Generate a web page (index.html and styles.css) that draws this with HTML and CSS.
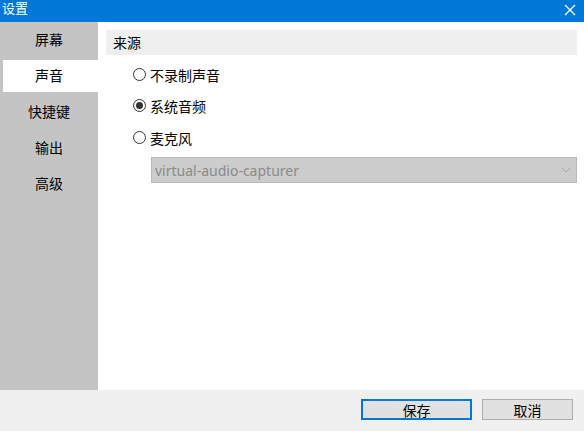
FILE: index.html
```html
<!DOCTYPE html>
<html lang="zh-CN">
<head>
<meta charset="utf-8">
<title>设置</title>
<link rel="stylesheet" href="styles.css">
</head>
<body>
<div class="window">
  <div class="titlebar">
    <span class="title">设置</span>
    <svg class="close" width="12" height="12" viewBox="0 0 12 12"><path d="M1 1 L11 11 M11 1 L1 11" stroke="#fff" stroke-width="1.3" fill="none"/></svg>
  </div>
  <div class="main">
    <div class="sidebar">
      <div class="nav-item">屏幕</div>
      <div class="nav-item active">声音</div>
      <div class="nav-item">快捷键</div>
      <div class="nav-item">输出</div>
      <div class="nav-item">高级</div>
    </div>
    <div class="content">
      <div class="section-head">来源</div>
      <div class="options">
        <label class="radio"><span class="dot"></span>不录制声音</label>
        <label class="radio checked"><span class="dot"></span>系统音频</label>
        <label class="radio"><span class="dot"></span>麦克风</label>
        <div class="select">
          <span class="select-text">virtual-audio-capturer</span>
          <svg class="chev" width="10" height="6" viewBox="0 0 10 6"><path d="M0.5 0.5 L5 5 L9.5 0.5" stroke="#a8a8a8" stroke-width="1" fill="none"/></svg>
        </div>
      </div>
    </div>
  </div>
  <div class="footer">
    <button class="btn primary">保存</button>
    <button class="btn">取消</button>
  </div>
</div>
</body>
</html>
```
FILE: styles.css
```css
* { box-sizing: border-box; }
html, body { margin: 0; padding: 0; }
body {
  width: 584px;
  height: 431px;
  overflow: hidden;
  font-family: "Noto Sans", "Noto Sans CJK SC", sans-serif;
  font-size: 14px;
  color: #000;
  background: #fff;
}
.window {
  display: flex;
  flex-direction: column;
  height: 431px;
}
.titlebar {
  height: 22px;
  background: #0078d7;
  display: flex;
  align-items: center;
  justify-content: space-between;
  padding: 0 8px 0 2px;
  color: #fff;
}
.title {
  font-size: 13px;
  line-height: 16px;
  margin-top: -6px;
}
.close { margin-top: -3px; }
.main {
  flex: 1;
  display: flex;
  min-height: 0;
}
.sidebar {
  width: 98px;
  background: #c4c4c4;
  padding-top: 2px;
  display: flex;
  flex-direction: column;
  gap: 4px;
}
.nav-item {
  height: 32px;
  margin-left: 3px;
  display: flex;
  align-items: center;
  justify-content: center;
  padding: 0 3px 2px 0;
  font-size: 14px;
}
.nav-item.active { background: #fff; }
.content {
  flex: 1;
  padding: 8px 7px 0 8px;
}
.section-head {
  height: 25px;
  background: #efefef;
  padding: 0 0 1px 7px;
  display: flex;
  align-items: center;
}
.options {
  padding-left: 27px;
  padding-top: 4px;
  display: flex;
  flex-direction: column;
}
.radio {
  height: 31px;
  display: flex;
  align-items: center;
  gap: 4px;
}
.radio:nth-child(3) { height: 33px; }
.dot {
  width: 13px;
  height: 13px;
  border: 1px solid #333;
  border-radius: 50%;
  display: flex;
  align-items: center;
  justify-content: center;
  background: #fff;
}
.radio.checked .dot::after {
  content: "";
  width: 7px;
  height: 7px;
  border-radius: 50%;
  background: #333;
}
.select {
  margin-top: 3px;
  margin-left: 18px;
  height: 26px;
  background: #cccccc;
  border: 1px solid #bababa;
  display: flex;
  align-items: center;
  justify-content: space-between;
  padding: 0 5px 0 3px;
}
.select-text {
  color: #8a8a8a;
  font-size: 14px;
}
.footer {
  height: 41px;
  background: #f0f0f0;
  display: flex;
  justify-content: flex-end;
  align-items: flex-start;
  padding: 9px 11px 0 0;
  gap: 10px;
}
.btn {
  height: 21px;
  width: 111px;
  background: #e1e1e1;
  border: 1px solid #adadad;
  font-family: "Noto Sans CJK SC", sans-serif;
  font-size: 14px;
  line-height: 1;
  padding: 0;
  color: #000;
}
.btn + .btn { width: 91px; }
.btn.primary { border: 2px solid #0078d7; }
```
